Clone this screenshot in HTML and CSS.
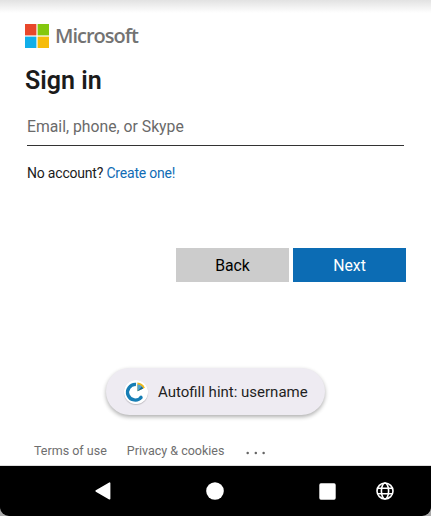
FILE: index.html
```html
<!DOCTYPE html>
<html lang="en">
<head>
<meta charset="utf-8">
<title>Sign in</title>
<link rel="stylesheet" href="styles.css">
</head>
<body>
<div class="screen">
  <main class="page">
    <div class="brand">
      <svg class="brand-mark" viewBox="0 0 24 24" aria-hidden="true">
        <path fill="#e8472b" d="M0 0h11.4v11.4H0z"/>
        <path fill="#84c80e" d="M12.6 0H24v11.4H12.6z"/>
        <path fill="#11aee9" d="M0 12.6h11.4V24H0z"/>
        <path fill="#f6bc0b" d="M12.6 12.6H24V24H12.6z"/>
      </svg>
      <span class="brand-name">Microsoft</span>
    </div>
    <h1>Sign in</h1>
    <div class="field">Email, phone, or Skype</div>
    <p class="signup">No account? <a>Create one!</a></p>
    <div class="actions">
      <button class="back">Back</button>
      <button class="next">Next</button>
    </div>
    <footer class="links">
      <a class="terms">Terms of use</a>
      <a class="privacy">Privacy &amp; cookies</a>
      <svg class="more" viewBox="0 0 20 4" aria-hidden="true"><g fill="#666"><circle cx="1.7" cy="2" r="1.25"/><circle cx="9.8" cy="2" r="1.25"/><circle cx="17.6" cy="2" r="1.25"/></g></svg>
    </footer>
  </main>
  <nav class="navbar">
    <svg class="nav-back" viewBox="0 0 18 20"><path d="M2.2 10 15.6 2.2v15.6z" fill="#fff" stroke="#fff" stroke-width="1.6" stroke-linejoin="round"/></svg>
    <svg class="nav-home" viewBox="0 0 18 18"><circle cx="9" cy="9" r="8.8" fill="#fff"/></svg>
    <svg class="nav-recent" viewBox="0 0 17 17"><rect x=".3" y=".3" width="16.4" height="16.4" rx="1.6" fill="#fff"/></svg>
    <svg class="nav-globe" viewBox="0 0 18 18"><g fill="none" stroke="#fff" stroke-width="1.6"><circle cx="9" cy="9" r="8"/><ellipse cx="9" cy="9" rx="3.6" ry="8"/><path d="M1.6 6.3h14.8M1.6 11.7h14.8"/></g></svg>
  </nav>
  <div class="toast">
    <svg class="toast-icon" viewBox="0 0 24 24">
      <circle cx="12" cy="12" r="12" fill="#fff"/>
      <path d="M12 4.5A7.8 7.8 0 1 0 17.3 17.3" fill="none" stroke="#177eb5" stroke-width="3.3" />
      <circle cx="17" cy="17.2" r="1.6" fill="#177eb5"/>
      <path d="M13.4 2.6A9.4 9.4 0 0 1 20.9 7.7L13.4 11.2z" fill="#efb81c"/>
      <path d="M13.4 4.3A7.6 7.6 0 0 1 19.2 8.5L13.4 11.2z" fill="#52a5cf"/>
      <path d="M13.4 11.2l5.8-2.7-1.4-1.9z" fill="#176b96"/>
    </svg>
    <span>Autofill hint: username</span>
  </div>
</div>
</body>
</html>
```

FILE: styles.css
```css
* { box-sizing: border-box; }
body {
  margin: 0;
  background: #aaa;
  color: #1b1b1b;
  font-family: Roboto, "Liberation Sans", sans-serif;
}
.screen {
  position: relative;
  display: flex;
  flex-direction: column;
  height: 516px;
  overflow: hidden;
  border-radius: 0 0 9px 9px;
}
.page {
  display: flex;
  flex-direction: column;
  height: 466px;
  padding: 24px 25px 0;
  background: linear-gradient(#e2e2e2, #fff 13px);
  border-bottom: 1px solid #ddd;
}
.brand { display: flex; align-items: center; height: 24px; }
.brand-mark { width: 24px; height: 24px; }
.brand-name {
  margin-left: 6px;
  color: #737373;
  font: 600 20px/24px "Open Sans", "Noto Sans", sans-serif;
  letter-spacing: -1px;
}
h1 {
  margin: 17px 0 0;
  font-size: 25px;
  line-height: 32px;
  font-weight: 600;
}
.field {
  height: 38px;
  margin: 11px 2px 0;
  border-bottom: 1px solid #333;
  color: #6a6a6a;
  font-size: 15.75px;
  line-height: 38px;
}
.signup {
  margin: 17px 2px 0;
  font-size: 14px;
  line-height: 20px;
  letter-spacing: -0.2px;
}
.signup a { color: #0f6cb5; }
.actions {
  display: flex;
  justify-content: flex-end;
  gap: 4px;
  margin-top: 65px;
}
button {
  width: 113px;
  height: 34px;
  padding: 0;
  border: 0;
  font: 15.8px/36px Roboto, sans-serif;
}
.back { background: #ccc; color: #000; }
.next { background: #0c6cb4; color: #fff; }
.links {
  display: flex;
  align-items: center;
  gap: 20px;
  height: 18px;
  margin: auto 0 5px 9px;
  color: #6e6e6e;
  font-size: 12.5px;
  line-height: 18px;
}
.more { width: 20px; height: 4px; margin: 3px 0 0 2px; }
.navbar {
  display: flex;
  align-items: center;
  height: 50px;
  padding-left: 94px;
  background: #000;
}
.nav-back { width: 18px; height: 20px; }
.nav-home { width: 18px; height: 18px; margin-left: 94px; }
.nav-recent { width: 17px; height: 17px; margin-left: 95px; }
.nav-globe { width: 18px; height: 18px; margin-left: 40px; }
.toast {
  position: absolute;
  left: 106px;
  top: 368px;
  display: flex;
  align-items: center;
  width: 219px;
  height: 47px;
  padding-left: 18px;
  border-radius: 24px;
  background: #eeebf2;
  box-shadow: 0 2px 4px rgb(0 0 0 / 32%);
  color: #1f1f23;
  font-size: 15px;
  white-space: nowrap;
}
.toast-icon {
  width: 24px;
  height: 24px;
  margin-right: 10px;
  border-radius: 50%;
  box-shadow: 0 1px 1px rgb(0 0 0 / 20%);
}
```
